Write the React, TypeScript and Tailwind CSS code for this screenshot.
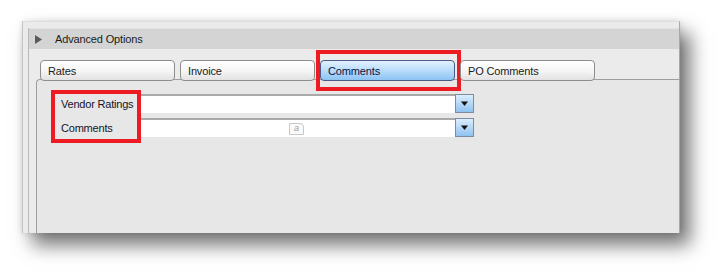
import React from "react";

const font = { fontFamily: '"Liberation Sans", Arial, sans-serif' };

function Tab({ label, active }: { label: string; active?: boolean }) {
  return (
    <div
      className={
        "w-[135px] h-[21px] rounded-[4px] border flex items-center pl-[7px] pt-[1px] text-[11px] tracking-[-0.15px] " +
        (active
          ? "border-[#4d5a86] bg-gradient-to-b from-[#e2f1fe] via-[#b9dcfb] to-[#8cc3f3] text-[#0c1240]"
          : "border-[#8e8e8e] bg-gradient-to-b from-[#ffffff] via-[#f6f6f6] to-[#e2e2e2] text-[#1b1b1b]")
      }
    >
      {label}
    </div>
  );
}

function DropBtn() {
  return (
    <div className="w-[19px] h-[19px] border border-[#7d8ba3] bg-gradient-to-b from-[#dcedfd] to-[#8fc3f1] flex items-center justify-center">
      <svg width="9" height="7" viewBox="0 0 9 7">
        <path d="M1 1.5h7L4.5 6z" fill="#111" />
      </svg>
    </div>
  );
}

function Field({ label, icon }: { label: string; icon?: boolean }) {
  return (
    <div className="flex h-[19px] items-stretch">
      <div className="w-[79px] flex items-center pt-[1px] text-[11px] tracking-[-0.2px] text-[#141428]">{label}</div>
      <div className="w-[315px] bg-white border-t-2 border-[#a9a9a9] relative flex items-center">
        {icon && (
          <div className="ml-[149px] w-[15px] h-[12px] border border-[#c8c8c8] rounded-tr-[4px] bg-[#fafafa] flex items-center justify-center text-[9px] italic text-[#9a9a9a] leading-none">
            a
          </div>
        )}
      </div>
      <DropBtn />
    </div>
  );
}

export default function App() {
  return (
    <div className="w-[722px] h-[276px] bg-white pl-[22px] pt-[21px] overflow-hidden" style={font}>
      <div className="relative w-[658px] h-[212px] bg-[#ebebeb] border-l border-t border-r border-l-[#c4c4c4] border-t-[#dedede] border-r-[#a8a8a8] pl-[5px] pt-[6px] flex shadow-[0_0_6px_rgba(0,0,0,0.12),10px_12px_18px_rgba(0,0,0,0.55)]">
        <div className="flex-1 flex flex-col border-l border-[#b8b8b8]">
          <div className="h-[21px] bg-[#d4d4d4] border-t border-[#e2e2e2] flex items-center">
            <svg width="8" height="9" viewBox="0 0 8 9" className="ml-[6px]">
              <path d="M0 0l7 4.5L0 9z" fill="#5a5a5a" />
            </svg>
            <span className="ml-[12px] text-[11px] tracking-[-0.15px] text-[#1b1b1b]">Advanced Options</span>
          </div>
          <div className="flex-1 flex flex-col pl-[7px] pt-[11px]">
            <div className="flex gap-[5px] pl-[4px] relative z-10 -mb-[2px]">
              <Tab label="Rates" />
              <Tab label="Invoice" />
              <Tab label="Comments" active />
              <Tab label="PO Comments" />
            </div>
            <div className="flex-1 border-t border-l border-[#9e9e9e] rounded-tl-[4px] bg-[#e7e7e7] pl-[24px] pt-[14px] flex flex-col gap-[5px]">
              <Field label="Vendor Ratings" />
              <Field label="Comments" icon />
            </div>
          </div>
        </div>
        <div className="absolute left-[293px] top-[28px] w-[145px] h-[41px] border-[4px] border-[#ed1c24]" />
        <div className="absolute left-[28px] top-[68px] w-[90px] h-[53px] border-[4px] border-[#ed1c24]" />
      </div>
    </div>
  );
}
